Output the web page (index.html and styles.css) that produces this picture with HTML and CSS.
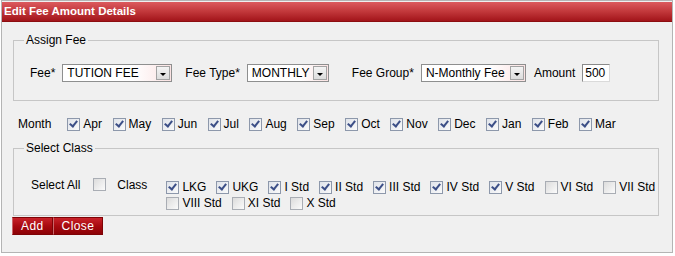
FILE: index.html
```html
<!DOCTYPE html>
<html>
<head>
    <title>Edit Fee Amount Details</title>
    <link rel="stylesheet" href="styles.css">
</head>
<body>
    <div class="dialog">
        <div class="title">Edit Fee Amount Details</div>

        <fieldset class="group assign">
            <legend>Assign Fee</legend>
            <div class="fee-row">
                <span class="field-label">Fee*</span>
                <span class="select sel-fee">
                    <span class="select-text">TUTION FEE</span>
                    <span class="select-btn"><span class="arrow"></span></span>
                </span>
                <span class="field-label">Fee Type*</span>
                <span class="select sel-type">
                    <span class="select-text">MONTHLY</span>
                    <span class="select-btn"><span class="arrow"></span></span>
                </span>
                <span class="field-label">Fee Group*</span>
                <span class="select sel-group">
                    <span class="select-text">N-Monthly Fee</span>
                    <span class="select-btn"><span class="arrow"></span></span>
                </span>
                <span class="field-label">Amount</span>
                <span class="amount">500</span>
            </div>
        </fieldset>

        <div class="month-row">
            <span class="month-label">Month</span>
            <span class="item"><span class="cb on"></span>Apr</span>
            <span class="item"><span class="cb on"></span>May</span>
            <span class="item"><span class="cb on"></span>Jun</span>
            <span class="item"><span class="cb on"></span>Jul</span>
            <span class="item"><span class="cb on"></span>Aug</span>
            <span class="item"><span class="cb on"></span>Sep</span>
            <span class="item"><span class="cb on"></span>Oct</span>
            <span class="item"><span class="cb on"></span>Nov</span>
            <span class="item"><span class="cb on"></span>Dec</span>
            <span class="item"><span class="cb on"></span>Jan</span>
            <span class="item"><span class="cb on"></span>Feb</span>
            <span class="item"><span class="cb on"></span>Mar</span>
        </div>

        <fieldset class="group classes">
            <legend>Select Class</legend>
            <div class="class-row">
                <span class="select-all">Select All</span>
                <span class="cb"></span>
                <span class="class-label">Class</span>
                <div class="class-list">
                    <span class="item"><span class="cb on"></span>LKG</span>
                    <span class="item"><span class="cb on"></span>UKG</span>
                    <span class="item"><span class="cb on"></span>I Std</span>
                    <span class="item"><span class="cb on"></span>II Std</span>
                    <span class="item"><span class="cb on"></span>III Std</span>
                    <span class="item"><span class="cb on"></span>IV Std</span>
                    <span class="item"><span class="cb on"></span>V Std</span>
                    <span class="item"><span class="cb"></span>VI Std</span>
                    <span class="item"><span class="cb"></span>VII Std</span>
                    <span class="item"><span class="cb"></span>VIII Std</span>
                    <span class="item"><span class="cb"></span>XI Std</span>
                    <span class="item"><span class="cb"></span>X Std</span>
                </div>
            </div>
        </fieldset>

        <div class="buttons">
            <button class="btn">Add</button>
            <button class="btn">Close</button>
        </div>
    </div>
</body>
</html>
```

FILE: styles.css
```css
body {
    margin: 0;
    padding: 0;
    background-color: #fff;
    font-family: "Liberation Sans", Arial, sans-serif;
    font-size: 12px;
    color: #000;
}

.dialog {
    margin-left: 1px;
    width: 670px;
    height: 251px;
    border: 1px solid #b4b4b4;
    background-color: #f0f0f0;
}

.title {
    margin: 1px 0 0 0;
    height: 19px;
    line-height: 19px;
    padding-left: 2px;
    border-bottom: 1px solid #8c0d10;
    background: linear-gradient(#dc5a5e, #c2383b 50%, #a2141a);
    color: #fff;
    font-weight: bold;
    font-size: 11.5px;
}

.group {
    margin: 11px 13px 0 11px;
    padding: 0 0 0 10px;
    border: 1px solid #c6c6c6;
}

.group legend {
    padding: 0 2px;
    line-height: 14px;
    font-size: 12px;
}

.classes {
    margin-top: 9px;
}

/* fee row */

.fee-row {
    display: flex;
    align-items: center;
    height: 18px;
    padding: 17px 0 18px 6px;
}

.field-label {
    margin-right: 7px;
}

.select {
    display: flex;
    box-sizing: border-box;
    height: 18px;
    border: 1px solid #8e8f8f;
    background: linear-gradient(to right, #fff 65%, #fbe3e3);
}

.select-text {
    flex: 1;
    padding-left: 4px;
    line-height: 16px;
    white-space: nowrap;
    overflow: hidden;
}

.select-btn {
    display: flex;
    align-items: center;
    justify-content: center;
    box-sizing: border-box;
    width: 14px;
    height: 14px;
    margin: 1px;
    border: 1px solid #a3a3a3;
    background: linear-gradient(#f4f4f4, #dcdcdc);
}

.arrow {
    width: 0;
    height: 0;
    margin-top: 2px;
    border-left: 3px solid transparent;
    border-right: 3px solid transparent;
    border-top: 3px solid #000;
}

.sel-fee {
    width: 110px;
    margin-right: 13px;
}

.sel-type {
    width: 82px;
    margin-right: 23px;
}

.sel-group {
    width: 105px;
    margin-right: 8px;
}

.amount {
    box-sizing: border-box;
    width: 28px;
    height: 18px;
    padding-left: 2px;
    line-height: 16px;
    border: 1px solid #dadada;
    border-top-color: #8a8a8a;
    border-left-color: #8a8a8a;
    background-color: #fff;
}

/* checkboxes */

.cb {
    position: relative;
    flex: none;
    box-sizing: border-box;
    width: 13px;
    height: 13px;
    border: 1px solid #a9adb4;
    background: linear-gradient(135deg, #dcdcdc, #fbfbfb);
}

.cb.on {
    border-color: #8d98ab;
    background: linear-gradient(135deg, #dfe3ea, #fafafa);
}

.cb.on::after {
    content: "";
    position: absolute;
    left: 3px;
    top: 0px;
    width: 3px;
    height: 6px;
    border: solid #3c4f87;
    border-width: 0 2px 2px 0;
    transform: rotate(38deg);
}

.item {
    display: flex;
    align-items: center;
}

.item .cb {
    margin-right: 3px;
}

/* month row */

.month-row {
    display: flex;
    align-items: center;
    height: 16px;
    margin-top: 15px;
    padding-left: 16px;
}

.month-label {
    margin-right: 16px;
}

.month-row .item {
    margin-right: 10.5px;
}

/* class row */

.class-row {
    display: flex;
    align-items: flex-start;
    padding: 23px 0 4px 7px;
}

.select-all {
    line-height: 14px;
    margin-right: 13px;
}

.class-row > .cb {
    margin-right: 11px;
}

.class-label {
    line-height: 14px;
    margin-right: 19px;
}

.class-list {
    flex: 1;
    display: flex;
    flex-wrap: wrap;
    column-gap: 10px;
    margin-top: 1px;
}

.class-list .item {
    height: 16px;
}

/* buttons */

.buttons {
    display: flex;
    margin: 1px 0 0 10px;
}

.btn {
    height: 18px;
    margin: 0;
    padding: 0 8px;
    border: 1px solid #7e0306;
    border-left-color: #c9666a;
    background: linear-gradient(#c8222a, #a80a10 50%, #8c0206);
    color: #fff;
    font-family: "Liberation Sans", Arial, sans-serif;
    font-size: 12px;
    letter-spacing: 0.4px;
}
```
